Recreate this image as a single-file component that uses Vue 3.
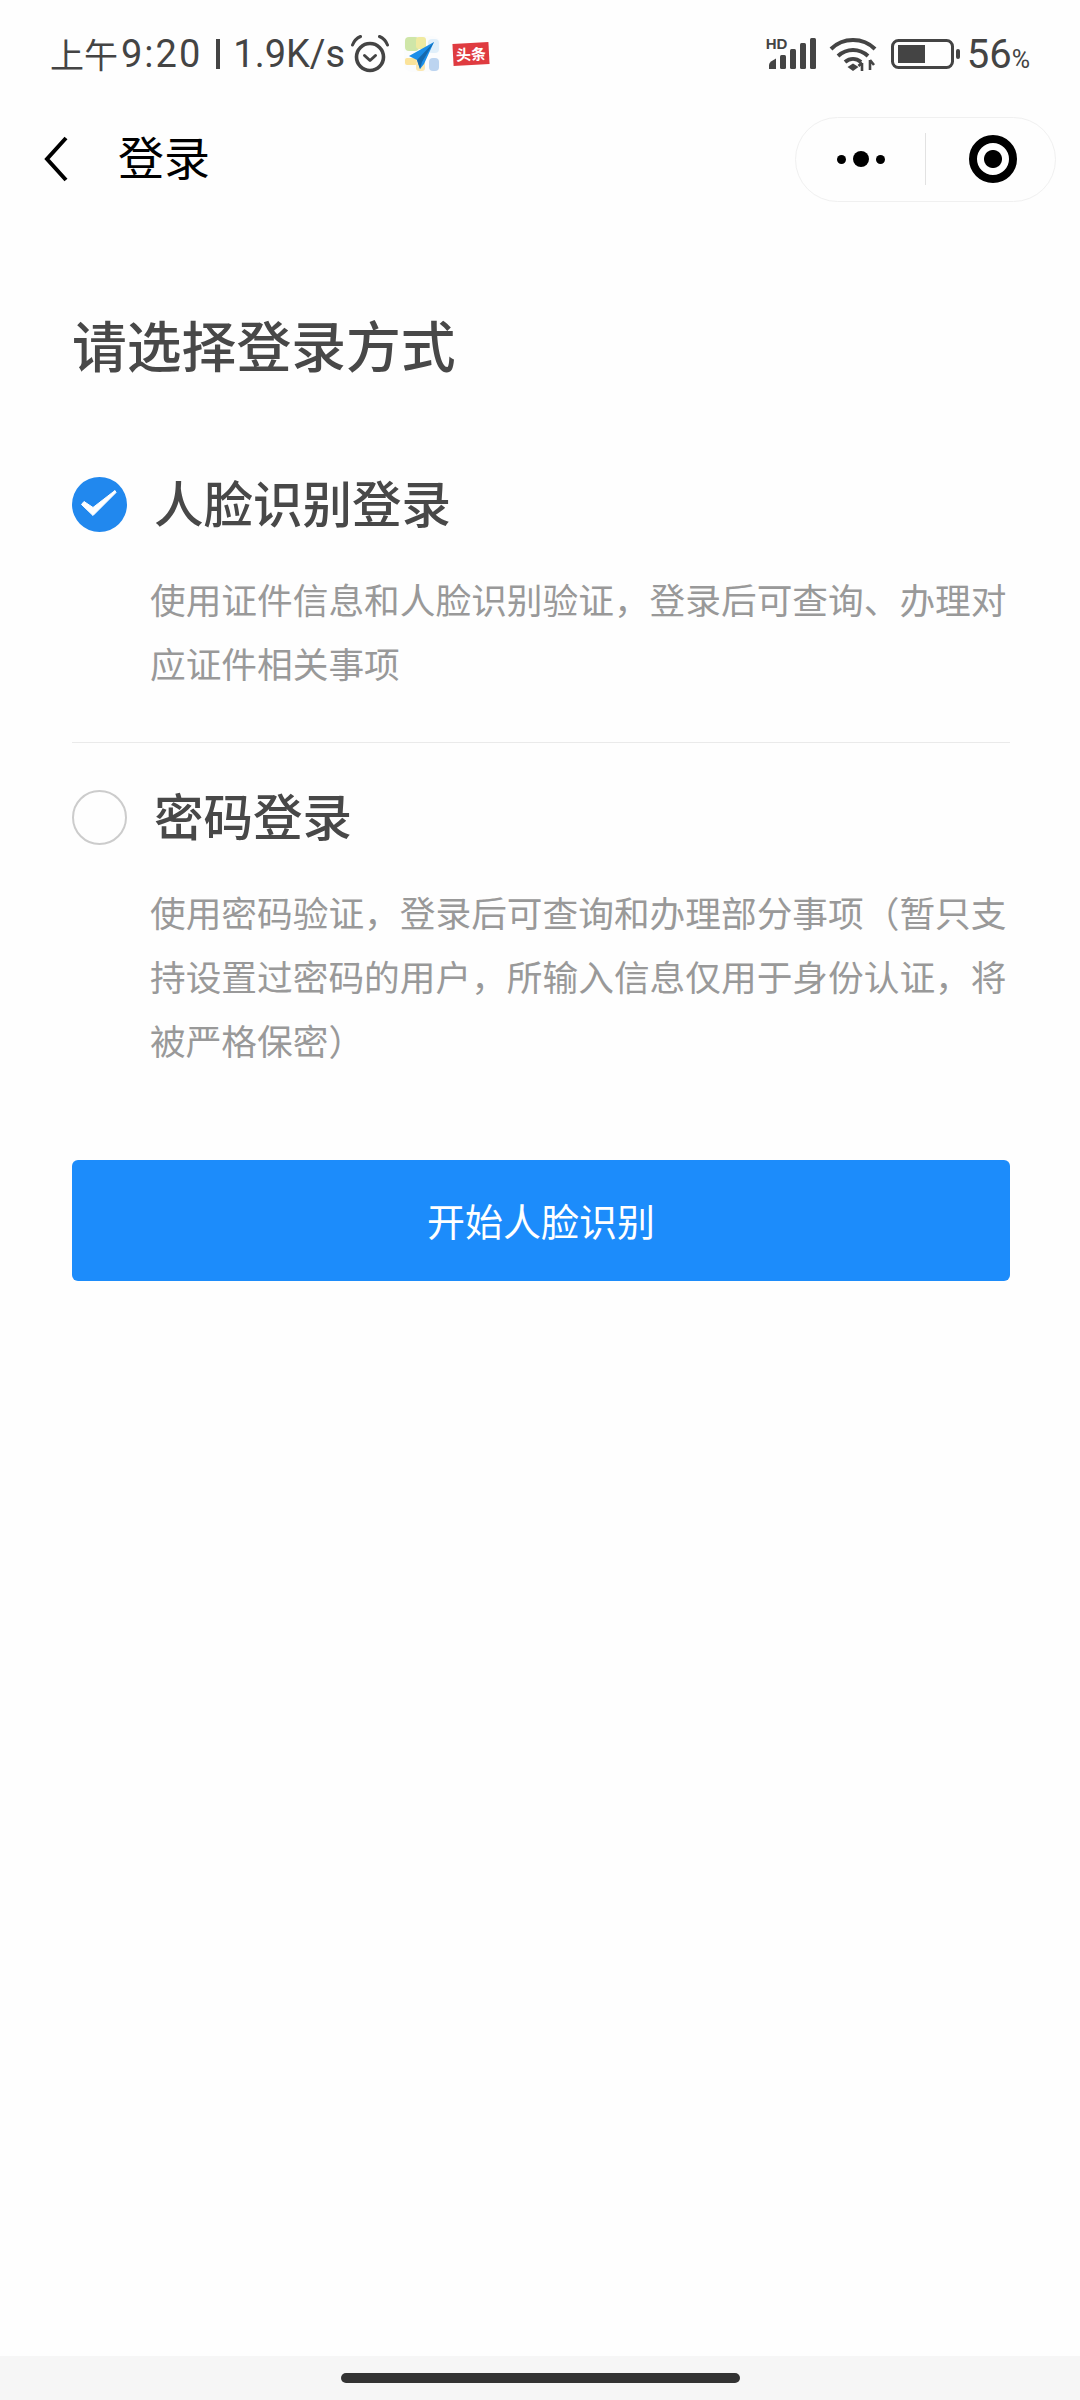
<script setup>
const options = [
  { id: 'face', label: '人脸识别登录', desc: '使用证件信息和人脸识别验证，登录后可查询、办理对应证件相关事项', checked: true },
  { id: 'pwd', label: '密码登录', desc: '使用密码验证，登录后可查询和办理部分事项（暂只支持设置过密码的用户，所输入信息仅用于身份认证，将被严格保密）', checked: false }
]
</script>

<template>
  <div class="page">
    <div class="status">
      <div class="status-left">
        <span class="clock"><span class="clock-cjk">上午</span><span class="clock-time">9:20</span><i class="sep"></i>1.9K/s</span>
        <svg class="alarm" width="38" height="38" viewBox="0 0 38 38" fill="none" stroke="#444" stroke-linecap="round" stroke-linejoin="round">
          <circle cx="19" cy="22" r="13.500" stroke-width="3.600" />
          <path d="M13.500 20.500l5.500 5 5.500-5" stroke-width="3" />
          <path d="M1.500 10C3 6 6 3 9.500 1.500M36.500 10C35 6 32 3 28.500 1.500" stroke-width="3" />
        </svg>
        <svg class="app" width="36" height="36" viewBox="0 0 36 36">
          <rect x="0" y="0" width="36" height="36" rx="8" fill="#fbfcfd" />
          <rect x="1" y="1" width="14" height="14" rx="4" fill="#cfe6a8" />
          <rect x="12" y="1" width="10" height="12" rx="3" fill="#f0eaa0" />
          <rect x="24" y="3" width="11" height="14" rx="4" fill="#e0effa" />
          <rect x="1" y="22" width="12" height="7" rx="2" fill="#fbe39a" />
          <rect x="12" y="22" width="9" height="13" rx="3" fill="#fbe7b0" />
          <rect x="25" y="22" width="10" height="13" rx="4" fill="#bcd4f0" />
          <path d="M30 6L5 20l8 4 3 9 4-5z" fill="#1b8ee8" />
          <path d="M30 6L13 24l3 9 2-7z" fill="#1468ad" />
        </svg>
        <span class="toutiao">头条</span>
      </div>
      <div class="status-right">
        <div class="signal">
          <span class="hd">HD</span>
          <svg width="48" height="31" viewBox="0 0 48 31" fill="#444">
            <path d="M1 31v-4q0-2 2-3.500l5-3V31z" />
            <rect x="12" y="17" width="6" height="14" rx="1.500" />
            <rect x="22" y="11" width="6" height="20" rx="1.500" />
            <rect x="32" y="5" width="6" height="26" rx="1.500" />
            <rect x="42" y="0" width="6" height="31" rx="1.500" />
          </svg>
        </div>
        <svg class="wifi" width="48" height="36" viewBox="0 0 48 36" fill="none" stroke="#444" stroke-width="4">
          <path d="M2 13C14 1 34 1 46 13" />
          <path d="M9 20c9-8 21-8 30 0" />
          <path d="M16 26c5-4 11-4 16 0" />
          <path d="M18.500 31l5.500-3.500 5.500 3.500-5.500 4z" fill="#444" stroke="none" />
          <path d="M33 27v8M29.500 30l3.500-3.500M41 24v10M41 24l4 5" stroke-width="2.600" />
        </svg>
        <svg class="battery" width="70" height="30" viewBox="0 0 70 30" fill="none">
          <rect x="1.500" y="1.500" width="60" height="27" rx="6" stroke="#444" stroke-width="3" />
          <rect x="7" y="6" width="27" height="18" fill="#444" />
          <rect x="65" y="10" width="4" height="10" rx="2" fill="#444" />
        </svg>
        <span class="level">56<small>%</small></span>
      </div>
    </div>

    <div class="nav">
      <svg class="back" width="24" height="46" viewBox="0 0 24 46" fill="none" stroke="#000" stroke-width="4">
        <path d="M22 2L3 23l19 21" />
      </svg>
      <span class="nav-title">登录</span>
      <div class="capsule">
        <div class="capsule-side capsule-more">
          <i class="dot"></i><i class="dot dot-big"></i><i class="dot"></i>
        </div>
        <i class="capsule-line"></i>
        <div class="capsule-side capsule-target">
          <i class="target"></i>
        </div>
      </div>
    </div>

    <main class="content">
      <h1 class="heading">请选择登录方式</h1>
      <section v-for="item in options" :key="item.id" class="option">
        <div class="option-head">
          <svg v-if="item.checked" class="radio" width="55" height="55" viewBox="0 0 55 55">
            <circle cx="27.500" cy="27.500" r="27.500" fill="#2188ee" />
            <path d="M9.500 27.500L21 38.500 44 15.500 43 13.500 21 30.500 12 24.500z" fill="#fff" stroke="#fff" stroke-width="1" stroke-linejoin="round" />
          </svg>
          <span v-else class="radio radio-empty"></span>
          <span class="option-label">{{ item.label }}</span>
        </div>
        <p class="option-desc">{{ item.desc }}</p>
      </section>
      <button class="start" type="button">开始人脸识别</button>
    </main>

    <div class="home-bar"><i class="home-pill"></i></div>
  </div>
</template>

<style>
html, body { margin: 0; background: #fff; }
</style>

<style scoped>
.page {
  width: 1080px;
  height: 2400px;
  display: flex;
  flex-direction: column;
  background: #fefefe;
  font-family: "Noto Sans CJK SC", "Noto Sans", sans-serif;
  overflow: hidden;
}
.status {
  height: 109px;
  flex: none;
  box-sizing: border-box;
  padding: 0 50px 2px 50px;
  display: flex;
  justify-content: space-between;
  align-items: center;
  color: #444;
}
.status-left, .status-right { display: flex; align-items: center; }
.clock {
  display: flex;
  align-items: center;
  font-family: Roboto, sans-serif;
  font-size: 38px;
  line-height: 40px;
  white-space: nowrap;
}
.clock-cjk {
  font-family: "Noto Sans CJK SC", sans-serif;
  font-size: 34px;
  margin-right: 3px;
}
.clock-time { letter-spacing: 2px; }
.sep {
  width: 4px;
  height: 30px;
  margin: 0 13px 0 14px;
  background: #444;
}
.alarm { margin-left: 6px; }
.app { margin-left: 15px; }
.toutiao {
  margin-left: 13px;
  width: 36px;
  height: 22px;
  background: #df3b40;
  color: #fff;
  font-size: 15px;
  font-weight: 700;
  line-height: 22px;
  text-align: center;
  white-space: nowrap;
  transform: rotate(-3deg);
}
.signal { position: relative; width: 48px; height: 31px; }
.signal svg { display: block; }
.hd {
  position: absolute;
  left: -2px;
  top: -1px;
  font-family: "Liberation Sans", sans-serif;
  font-size: 15px;
  font-weight: 700;
  line-height: 14px;
  color: #444;
}
.wifi { margin-left: 13px; }
.battery { margin-left: 14px; }
.level {
  margin: 7px 0 0 6px;
  font-family: Roboto, sans-serif;
  font-size: 40px;
  line-height: 40px;
}
.level small { font-size: 25px; }
.nav {
  height: 100px;
  flex: none;
  box-sizing: border-box;
  padding: 0 24px 0 44px;
  display: flex;
  align-items: center;
}
.nav-title {
  margin: -8px 0 0 50px;
  font-size: 46px;
  line-height: 50px;
  color: #000;
}
.capsule {
  margin-left: auto;
  width: 261px;
  height: 85px;
  box-sizing: border-box;
  border: 1.500px solid #f0f0f0;
  border-radius: 43px;
  display: flex;
  align-items: center;
}
.capsule-side {
  flex: 1;
  display: flex;
  align-items: center;
  justify-content: center;
  gap: 7px;
}
.capsule-more { flex: none; width: 129px; }
.capsule-target { padding-left: 4px; }
.capsule-line { width: 1px; height: 52px; background: #e2e2e2; }
.dot { width: 9px; height: 9px; border-radius: 50%; background: #000; }
.dot-big { width: 16px; height: 16px; }
.target {
  box-sizing: border-box;
  width: 48px;
  height: 48px;
  border: 8px solid #000;
  border-radius: 50%;
  background: radial-gradient(circle, #000 0 8.500px, #fff 9.500px);
}
.content {
  flex: 1;
  padding: 0 70px 0 72px;
}
.heading {
  margin: 0;
  padding-top: 96px;
  font-size: 54.800px;
  font-weight: 500;
  line-height: 76px;
  color: #484848;
}
.option { padding: 96px 0 0; }
.option + .option { border-top: 1.500px solid #eaeaea; margin-top: 47px; padding-top: 47px; }
.option-head { display: flex; align-items: center; height: 55px; }
.radio { flex: none; display: block; }
.radio-empty {
  box-sizing: border-box;
  width: 55px;
  height: 55px;
  border: 2px solid #ccc;
  border-radius: 50%;
}
.option-label {
  margin: -7px 0 0 27px;
  font-size: 49.500px;
  font-weight: 500;
  line-height: 55px;
  color: #484848;
}
.option-desc {
  margin: 35px 0 0 78px;
  font-size: 35.700px;
  line-height: 64px;
  color: #999;
}
.start {
  display: block;
  width: 100%;
  height: 121px;
  margin-top: 88px;
  padding: 0 0 2px;
  border: 0;
  border-radius: 6px;
  background: #1c8cfb;
  color: #fff;
  font-family: inherit;
  font-size: 38px;
}
.home-bar {
  height: 44px;
  flex: none;
  background: #f6f6f6;
  display: flex;
  justify-content: center;
  padding-top: 17px;
  box-sizing: border-box;
}
.home-pill { width: 399px; height: 10px; border-radius: 5px; background: #333; }
</style>
